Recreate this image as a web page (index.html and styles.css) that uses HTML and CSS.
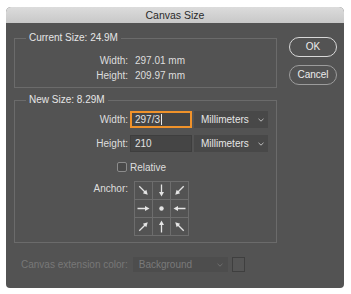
FILE: index.html
```html
<!DOCTYPE html>
<html>
<head>
<meta charset="utf-8">
<link rel="stylesheet" href="styles.css">
</head>
<body>
<div class="dialog">
  <div class="titlebar">Canvas Size</div>
  <div class="content">
    <div class="main">
      <fieldset class="group g1">
        <legend>Current Size: 24.9M</legend>
        <div class="kv"><span class="lbl">Width:</span><span class="val">297.01 mm</span></div>
        <div class="kv"><span class="lbl">Height:</span><span class="val">209.97 mm</span></div>
      </fieldset>
      <fieldset class="group g2">
        <legend>New Size: 8.29M</legend>
        <div class="field">
          <span class="flbl">Width:</span>
          <div class="input focused">297/3<span class="caret"></span></div>
          <div class="select"><span>Millimeters</span><svg class="chev" width="6" height="4" viewBox="0 0 6 4"><polyline points="0.5,0.8 3,3.2 5.5,0.8" fill="none" stroke="#bdbdbd" stroke-width="1"/></svg></div>
        </div>
        <div class="field">
          <span class="flbl">Height:</span>
          <div class="input">210</div>
          <div class="select"><span>Millimeters</span><svg class="chev" width="6" height="4" viewBox="0 0 6 4"><polyline points="0.5,0.8 3,3.2 5.5,0.8" fill="none" stroke="#bdbdbd" stroke-width="1"/></svg></div>
        </div>
        <div class="relative"><span class="checkbox"></span><span>Relative</span></div>
        <div class="anchor">
          <span class="alabel">Anchor:</span>
          <div class="grid">
            <div class="cell"><svg class="arr r45" viewBox="0 0 17 17"><line x1="2.5" y1="8.5" x2="11" y2="8.5"/><polygon points="10,6 14.5,8.5 10,11"/></svg></div>
            <div class="cell"><svg class="arr r90" viewBox="0 0 17 17"><line x1="2.5" y1="8.5" x2="11" y2="8.5"/><polygon points="10,6 14.5,8.5 10,11"/></svg></div>
            <div class="cell"><svg class="arr r135" viewBox="0 0 17 17"><line x1="2.5" y1="8.5" x2="11" y2="8.5"/><polygon points="10,6 14.5,8.5 10,11"/></svg></div>
            <div class="cell"><svg class="arr" viewBox="0 0 17 17"><line x1="2.5" y1="8.5" x2="11" y2="8.5"/><polygon points="10,6 14.5,8.5 10,11"/></svg></div>
            <div class="cell"><svg class="arr" viewBox="0 0 17 17"><circle cx="8.5" cy="8.5" r="2.2"/></svg></div>
            <div class="cell"><svg class="arr r180" viewBox="0 0 17 17"><line x1="2.5" y1="8.5" x2="11" y2="8.5"/><polygon points="10,6 14.5,8.5 10,11"/></svg></div>
            <div class="cell"><svg class="arr rm45" viewBox="0 0 17 17"><line x1="2.5" y1="8.5" x2="11" y2="8.5"/><polygon points="10,6 14.5,8.5 10,11"/></svg></div>
            <div class="cell"><svg class="arr rm90" viewBox="0 0 17 17"><line x1="2.5" y1="8.5" x2="11" y2="8.5"/><polygon points="10,6 14.5,8.5 10,11"/></svg></div>
            <div class="cell"><svg class="arr rm135" viewBox="0 0 17 17"><line x1="2.5" y1="8.5" x2="11" y2="8.5"/><polygon points="10,6 14.5,8.5 10,11"/></svg></div>
          </div>
        </div>
      </fieldset>
    </div>
    <div class="buttons">
      <div class="btn default">OK</div>
      <div class="btn">Cancel</div>
    </div>
  </div>
  <div class="extension">
    <span class="elabel">Canvas extension color:</span>
    <div class="dselect"><span>Background</span><svg class="chev" width="6" height="4" viewBox="0 0 6 4"><polyline points="0.5,0.8 3,3.2 5.5,0.8" fill="none" stroke="#6e6e6e" stroke-width="1"/></svg></div>
    <div class="swatch"></div>
  </div>
</div>
</body>
</html>
```

FILE: styles.css
```css
html, body {
  margin: 0;
  padding: 0;
  background: #ffffff;
}

.dialog {
  width: 338px;
  height: 281px;
  margin: 7px 0 0 6px;
  background: #535353;
  border-radius: 5px 5px 4px 4px;
  overflow: hidden;
  display: flex;
  flex-direction: column;
  font-family: "Liberation Sans", Arial, sans-serif;
  font-size: 10px;
  color: #dedede;
}

.titlebar {
  height: 16px;
  line-height: 16px;
  text-align: center;
  background: linear-gradient(#dcdcdc, #c8c8c8);
  color: #2a2a2a;
  font-size: 10.5px;
}

.content {
  display: flex;
  padding: 9px 7px 0 8px;
  gap: 12px;
}

.main {
  width: 263px;
  display: flex;
  flex-direction: column;
  gap: 6px;
}

.group {
  margin: 0;
  border: 1px solid #6b6b6b;
  min-width: 0;
}

.group legend {
  margin-left: 11px;
  padding: 0 3px;
  line-height: 12px;
  color: #e6e6e6;
}

.g1 {
  padding: 9px 0 4px 0;
}

.kv {
  display: flex;
  line-height: 15px;
}

.kv .lbl {
  width: 113px;
  text-align: right;
}

.kv .val {
  margin-left: 7px;
}

.g2 {
  padding: 5px 0 6px 0;
  display: flex;
  flex-direction: column;
}

.field {
  display: flex;
  align-items: center;
  height: 17px;
}

.field + .field {
  margin-top: 7px;
}

.flbl {
  width: 113px;
  text-align: right;
  margin-right: 2px;
}

.input {
  width: 62px;
  height: 17px;
  box-sizing: border-box;
  background: #454545;
  border: 1px solid #3e3e3e;
  padding-left: 4px;
  line-height: 15px;
  color: #e2e2e2;
  display: flex;
  align-items: center;
}

.input.focused {
  border: 2px solid #f0922a;
  padding-left: 3px;
  line-height: 13px;
}

.caret {
  display: inline-block;
  width: 1px;
  height: 11px;
  margin-left: 1px;
  background: #e8e8e8;
}

.select {
  margin-left: 2px;
  width: 74px;
  height: 17px;
  box-sizing: border-box;
  background: #484848;
  display: flex;
  align-items: center;
  justify-content: space-between;
  padding: 0 4px 0 7px;
  color: #e6e6e6;
}

.relative {
  margin-top: 9px;
  height: 12px;
  display: flex;
  align-items: center;
  padding-left: 102px;
}

.checkbox {
  width: 10px;
  height: 10px;
  box-sizing: border-box;
  border: 1px solid #8c8c8c;
  border-radius: 2px;
  background: #4a4a4a;
  margin-right: 3px;
}

.anchor {
  margin-top: 8px;
  display: flex;
}

.alabel {
  width: 113px;
  text-align: right;
  line-height: 14px;
  padding-top: 1px;
}

.grid {
  margin-left: 6px;
  display: grid;
  grid-template-columns: repeat(3, 17px);
  grid-template-rows: repeat(3, 17px);
  gap: 1px;
  padding: 1px;
  background: #6d6d6d;
}

.cell {
  background: #535353;
}

.arr {
  display: block;
  width: 17px;
  height: 17px;
  stroke: #e4e4e4;
  stroke-width: 1.3;
  fill: #e4e4e4;
}

.arr polygon, .arr circle {
  stroke: none;
}

.r45 { transform: rotate(45deg); }
.r90 { transform: rotate(90deg); }
.r135 { transform: rotate(135deg); }
.r180 { transform: rotate(180deg); }
.rm45 { transform: rotate(-45deg); }
.rm90 { transform: rotate(-90deg); }
.rm135 { transform: rotate(-135deg); }

.buttons {
  width: 48px;
  display: flex;
  flex-direction: column;
}

.btn {
  height: 20px;
  box-sizing: border-box;
  border: 1px solid #9c9c9c;
  border-radius: 10px;
  text-align: center;
  line-height: 18px;
  color: #ececec;
  margin-top: 8px;
}

.btn.default {
  border-color: #d8d8d8;
  margin-top: 5px;
}

.extension {
  display: flex;
  align-items: center;
  padding-left: 15px;
  margin-top: 14px;
  height: 15px;
  color: #787878;
}

.elabel {
  margin-right: 5px;
}

.dselect {
  width: 95px;
  height: 15px;
  box-sizing: border-box;
  background: #4d4d4d;
  display: flex;
  align-items: center;
  justify-content: space-between;
  padding: 0 5px 0 6px;
  color: #7a7a7a;
}

.swatch {
  margin-left: 4px;
  width: 13px;
  height: 15px;
  box-sizing: border-box;
  border: 1px solid #3f3f3f;
  background: #555555;
}
```
